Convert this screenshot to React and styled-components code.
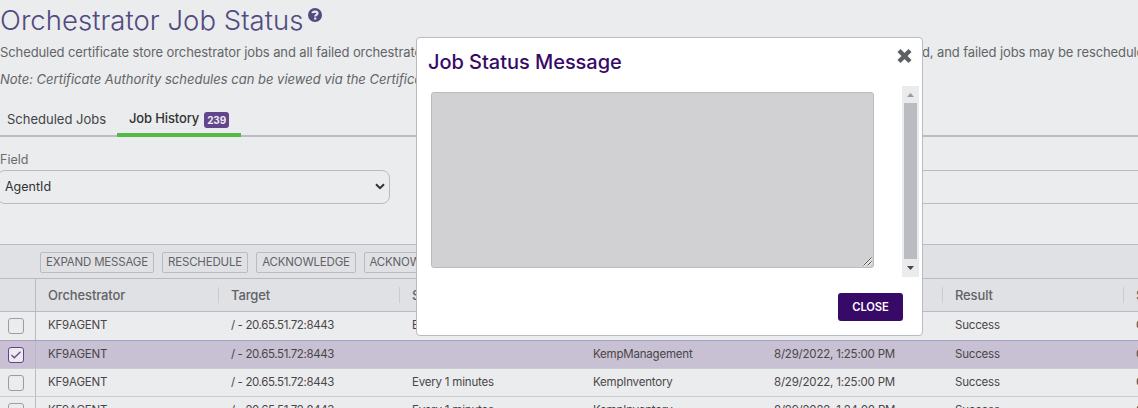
import React from 'react';
import styled, { createGlobalStyle } from 'styled-components';

const Global = createGlobalStyle`
  * { box-sizing: border-box; }
  body {
    margin: 0;
    overflow: hidden;
    background: #eaecee;
    font-family: Inter, "Liberation Sans", sans-serif;
    color: #4a4648;
  }
`;

const Page = styled.main`
  position: relative;
  width: 1138px;
  height: 408px;
  overflow: hidden;
  white-space: nowrap;
`;

const Title = styled.h1`
  display: flex;
  gap: 5px;
  height: 40px;
  margin: 0;
  font-size: 27.5px;
  line-height: 40px;
  font-weight: 350;
  letter-spacing: 0.03px;
  color: #524a80;
`;

const HelpIcon = styled.svg`
  width: 14px;
  height: 14px;
  margin-top: 8px;
`;

const Description = styled.p`
  display: flex;
  margin: 0;
  height: 24px;
  font-size: 13px;
  line-height: 24px;
  letter-spacing: ${(p) => (p.$note ? '0' : '-0.1px')};
  font-style: ${(p) => (p.$note ? 'italic' : 'normal')};
  margin-bottom: ${(p) => (p.$note ? '13px' : '3px')};
  color: #646466;
`;

const DescriptionLead = styled.span`
  flex: 0 0 922px;
  overflow: hidden;
`;

const Tabs = styled.nav`
  display: flex;
  height: 33px;
  border-bottom: 2px solid #babcc0;
`;

const Tab = styled.div`
  display: flex;
  align-items: center;
  gap: 5px;
  height: 33px;
  width: ${(p) => p.$width}px;
  padding: ${(p) => (p.$active ? '0 0 1px 12px' : '0 0 4px 7px')};
  font-size: 13px;
  font-weight: ${(p) => (p.$active ? 500 : 400)};
  letter-spacing: ${(p) => (p.$active ? '-0.14px' : 0)};
  color: ${(p) => (p.$active ? '#333' : '#434345')};
  border-bottom: ${(p) => (p.$active ? '4px solid #55b948' : 0)};
`;

const Badge = styled.span`
  width: 25px;
  height: 16px;
  margin-top: 3px;
  border-radius: 3px;
  background: #62458b;
  color: #eeeaf2;
  font-size: 10px;
  line-height: 16px;
  font-weight: 700;
  text-align: center;
`;

const Filters = styled.section`
  display: flex;
  gap: 26px;
  height: 107px;
  padding-top: 14px;
`;

const FieldGroup = styled.div`
  flex: ${(p) => (p.$wide ? '0 0 760px' : '0 0 393px')};
  margin-left: ${(p) => (p.$wide ? 0 : '-3px')};
`;

const FieldLabel = styled.label`
  display: block;
  height: 19px;
  padding-left: 3px;
  line-height: 17px;
  font-size: 12.5px;
  color: #6b6b6e;
`;

const SelectBox = styled.div`
  display: flex;
  align-items: center;
  justify-content: space-between;
  height: 34px;
  padding: 0 4px 1px 7px;
  border: 1px solid #b9bbc0;
  border-radius: 8px;
  font-size: 12.5px;
  color: #333;
`;

const Toolbar = styled.div`
  display: flex;
  gap: 8px;
  height: 34px;
  padding: 7px 0 0 40px;
  background: #e0e1e5;
  border-top: 1px solid #b9bbc0;
`;

const ToolButton = styled.button`
  flex: 0 0 ${(p) => p.$width}px;
  height: 21px;
  padding: 0;
  border: 1px solid #b9bbc0;
  border-radius: 2px;
  background: transparent;
  font: 400 11.5px Inter, sans-serif;
  line-height: 17px;
  letter-spacing: -0.19px;
  color: #626266;
`;

const Row = styled.div`
  display: flex;
  height: ${(p) => p.$height}px;
  background: ${(p) => (p.$selected ? '#c8c0d3' : '#eaecee')};
  border-bottom: 1px solid ${(p) => (p.$beforeSelected ? '#a99fc3' : '#cbccd0')};
`;

const HeaderRow = styled(Row)`
  background: #e0e1e5;
  border-top: 1px solid #b9bbc0;
  border-bottom-color: #b9bbc0;
`;

const CheckCell = styled.div`
  flex: 0 0 36px;
  padding: 6px 0 0 8px;
  border-right: 1px solid ${(p) => (p.$selected ? '#bab5c8' : '#b9bbc0')};
`;

const Checkbox = styled.div`
  display: flex;
  align-items: center;
  justify-content: center;
  width: 16px;
  height: 16px;
  border: 1px solid ${(p) => (p.$checked ? '#6b3c91' : '#9b9ca1')};
  border-radius: 3px;
  background: #eaecee;
`;

const Cell = styled.div`
  flex: 0 0 ${(p) => (p.$first ? 183 : 181)}px;
  padding-left: 12px;
  font-size: 11.5px;
  line-height: 27px;
  letter-spacing: ${(p) => (p.$tight ? '-0.38px' : '-0.2px')};
  color: #4a4648;
`;

const HeaderCell = styled(Cell)`
  display: flex;
  justify-content: space-between;
  align-items: center;
  font-size: 13px;
  font-weight: 500;
  letter-spacing: -0.13px;
  color: #626266;
  &::after {
    content: '';
    width: 1px;
    height: 16px;
    background: #cbccd0;
  }
`;

const Modal = styled.section`
  position: absolute;
  left: 416px;
  top: 37px;
  display: flex;
  flex-direction: column;
  width: 507px;
  height: 299px;
  background: #fff;
  border: 1px solid #b9bbc0;
  border-radius: 4px;
`;

const ModalHeader = styled.header`
  display: flex;
  justify-content: space-between;
  height: 48px;
  padding: 9px 9px 0 11px;
`;

const ModalTitle = styled.h2`
  margin: 0;
  font-size: 20px;
  line-height: 30px;
  font-weight: 500;
  letter-spacing: -0.04px;
  color: #370a68;
`;

const CloseIcon = styled.svg`
  width: 17px;
  height: 17px;
`;

const ModalBody = styled.div`
  display: flex;
  justify-content: space-between;
  height: 191px;
  padding: 0 3px 0 14px;
`;

const MessageBox = styled.div`
  display: flex;
  align-items: flex-end;
  justify-content: flex-end;
  width: 443px;
  height: 176px;
  margin-top: 6px;
  background: #d1d1d3;
  border: 1px solid #b9bbc0;
  border-radius: 3px;
`;

const Scrollbar = styled.div`
  display: flex;
  flex-direction: column;
  align-items: center;
  width: 17px;
  height: 191px;
  background: #eaebed;
`;

const Thumb = styled.div`
  width: 13px;
  height: 156px;
  background: #bbbcc1;
`;

const Arrow = styled.svg`
  width: 17px;
  height: ${(p) => p.$height}px;
`;

const ModalFooter = styled.footer`
  display: flex;
  justify-content: flex-end;
  padding: 16px 19px 0 0;
`;

const CloseButton = styled.button`
  width: 65px;
  height: 28px;
  padding: 0;
  border: 0;
  border-radius: 3px;
  background: #370a68;
  color: #fff;
  font: 600 11.2px Inter, sans-serif;
  letter-spacing: -0.1px;
`;

const columns = ['Orchestrator', 'Target', 'Schedule', 'Job Type', 'Date', 'Result', 'Status'];
const target = '/ - 20.65.51.72:8443';
const jobs = [
  { h: 29, schedule: 'Every 1 minutes', type: 'KempInventory', date: '8/29/2022, 1:25:00 PM', beforeSelected: true },
  { h: 28, schedule: '', type: 'KempManagement', date: '8/29/2022, 1:25:00 PM', selected: true },
  { h: 28, schedule: 'Every 1 minutes', type: 'KempInventory', date: '8/29/2022, 1:25:00 PM' },
  { h: 28, schedule: 'Every 1 minutes', type: 'KempInventory', date: '8/29/2022, 1:24:00 PM' },
];

export default function App() {
  return (
    <Page>
      <Global />
      <Title>
        Orchestrator Job Status
        <HelpIcon viewBox="0 0 14 14">
          <circle cx="7" cy="7" r="7" fill="#524a80" />
          <path d="M4.5 5.2C4.7 3.1 9.5 3 9.5 5.4C9.5 7 7.2 6.8 7.2 8.5" fill="none" stroke="#eaecee" strokeWidth="2.1" />
          <path d="M6.1 9.5h2.2v2.1h-2.2z" fill="#eaecee" />
        </HelpIcon>
      </Title>
      <Description>
        <DescriptionLead>Scheduled certificate store orchestrator jobs and all failed orchestrator jobs</DescriptionLead>
        <span>d, and failed jobs may be rescheduled</span>
      </Description>
      <Description $note>Note: Certificate Authority schedules can be viewed via the Certificate</Description>
      <Tabs>
        <Tab $width={117}>Scheduled Jobs</Tab>
        <Tab $width={124} $active>
          Job History <Badge>239</Badge>
        </Tab>
      </Tabs>
      <Filters>
        <FieldGroup>
          <FieldLabel>Field</FieldLabel>
          <SelectBox>
            AgentId
            <svg width="10" height="7" viewBox="0 0 10 7">
              <path d="M1 1.2L5 5.2L9 1.2" fill="none" stroke="#333" strokeWidth="2" />
            </svg>
          </SelectBox>
        </FieldGroup>
        <FieldGroup $wide>
          <FieldLabel />
          <SelectBox />
        </FieldGroup>
      </Filters>
      <Toolbar>
        <ToolButton $width={114}>EXPAND MESSAGE</ToolButton>
        <ToolButton $width={86}>RESCHEDULE</ToolButton>
        <ToolButton $width={100}>ACKNOWLEDGE</ToolButton>
        <ToolButton $width={122}>ACKNOWLEDGE ALL</ToolButton>
      </Toolbar>
      <HeaderRow $height={34}>
        <CheckCell />
        {columns.map((name, i) => (
          <HeaderCell key={name} $first={i === 0}>{name}</HeaderCell>
        ))}
      </HeaderRow>
      {jobs.map((job, i) => (
        <Row key={i} $height={job.h} $selected={job.selected} $beforeSelected={job.beforeSelected}>
          <CheckCell $selected={job.selected}>
            <Checkbox $checked={job.selected}>
              {job.selected && (
                <svg width="12" height="10" viewBox="0 0 12 10">
                  <path d="M1.5 5L4.3 7.8L10.5 1.8" fill="none" stroke="#67488e" strokeWidth="1.3" />
                </svg>
              )}
            </Checkbox>
          </CheckCell>
          <Cell $first>KF9AGENT</Cell>
          <Cell $tight>{target}</Cell>
          <Cell>{job.schedule}</Cell>
          <Cell>{job.type}</Cell>
          <Cell>{job.date}</Cell>
          <Cell>Success</Cell>
          <Cell>Completed</Cell>
        </Row>
      ))}
      <Modal>
        <ModalHeader>
          <ModalTitle>Job Status Message</ModalTitle>
          <CloseIcon viewBox="0 0 17 17">
            <path d="M3 3.5L14 14.5M14 3.5L3 14.5" stroke="#5f6065" strokeWidth="4.4" />
          </CloseIcon>
        </ModalHeader>
        <ModalBody>
          <MessageBox>
            <svg width="10" height="10" viewBox="0 0 10 10">
              <path d="M0.5 9L8.5 1M4.5 9L8.5 5" stroke="#eee" strokeWidth="2.4" />
              <path d="M0.5 8.5L8.5 0.5M4.5 8.5L8.5 4.5" stroke="#4d4d50" />
            </svg>
          </MessageBox>
          <Scrollbar>
            <Arrow $height={17} viewBox="0 0 17 17">
              <path d="M5 11L8.5 7L12 11z" fill="#9a9ba2" />
            </Arrow>
            <Thumb />
            <Arrow $height={18} viewBox="0 0 17 18">
              <path d="M5 7L8.5 11L12 7z" fill="#4a4648" />
            </Arrow>
          </Scrollbar>
        </ModalBody>
        <ModalFooter>
          <CloseButton>CLOSE</CloseButton>
        </ModalFooter>
      </Modal>
    </Page>
  );
}
